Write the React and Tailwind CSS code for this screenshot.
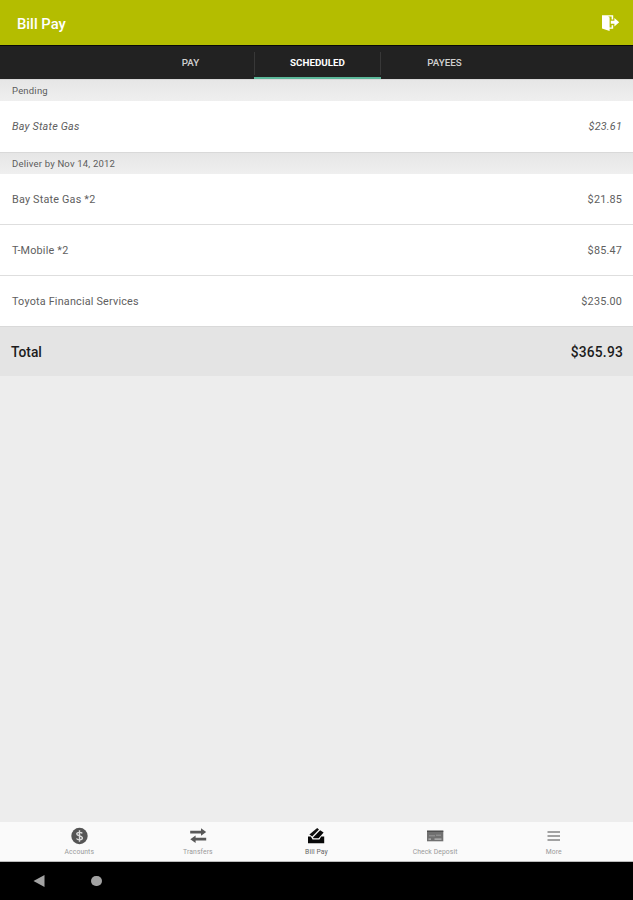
import React from "react";

const SCHEDULED = [
  { name: "Bay State Gas *2", amount: "$21.85" },
  { name: "T-Mobile *2", amount: "$85.47" },
  { name: "Toyota Financial Services", amount: "$235.00" },
];

function LogoutIcon() {
  return (
    <svg width="20" height="18" viewBox="0 0 20 18" className="block">
      <path d="M2 1.2 H13.2 V5.5 H11.6 V2.6 H8.2 L9.6 3.4 V13.4 H11.6 V11.2 H13.2 V14.8 H9.6 V17 L2 14.4 Z" fill="#fff" />
      <path d="M10.8 6.7 H14.4 V4 L19.2 8.2 L14.4 12.4 V9.7 H10.8 Z" fill="#fff" />
    </svg>
  );
}

function AccountsIcon() {
  return (
    <svg width="18" height="18" viewBox="0 0 18 18" className="block">
      <circle cx="9.5" cy="9" r="8.2" fill="#555" />
      <path d="M12.3 6.3 C11.5 5.1 6.8 4.7 6.8 7 C6.8 9.4 12.4 8.4 12.4 11 C12.4 13.3 7.5 13.1 6.5 11.5 M9.5 3.3 V14.7" fill="none" stroke="#dcdcdc" strokeWidth="1.4" />
    </svg>
  );
}

function TransfersIcon() {
  return (
    <svg width="18" height="18" viewBox="0 0 18 18" className="block" fill="#585858">
      <path d="M1.2 3.7 H12 V1.2 L17.2 5 L12 8.8 V6.5 H1.2 Z" />
      <path d="M17.2 10.8 H6.6 V8.5 L1.3 12.2 L6.6 15.9 V13.6 H17.2 Z" />
    </svg>
  );
}

function BillPayIcon() {
  return (
    <svg width="18" height="18" viewBox="0 0 18 18" className="block">
      <path d="M1 9.4 H3.8 L5.6 12.4 H12.4 L14.2 9.4 H17.2 V16.3 H1 Z" fill="#080808" />
      <path d="M2.4 7.6 L10.2 1 L12 2.6 L5.2 9.6 Z" fill="#111" />
      <path d="M6 10.4 L13.2 3.2 L16.6 5.6 L11.6 11.2 H6.6 Z" fill="#080808" />
    </svg>
  );
}

function CheckIcon() {
  return (
    <svg width="18" height="18" viewBox="0 0 18 18" className="block">
      <rect x="1" y="3.7" width="16.3" height="10.6" fill="#707070" />
      <path d="M1 4.3 H17.3" stroke="#4c4c4c" strokeWidth="1.3" />
      <path d="M3 8.8 H9 M10 8.2 H15" stroke="#999" strokeWidth="1" />
      <path d="M2.5 12.2 H5 M8.5 12.2 H15.5" stroke="#bbb" strokeWidth="1.2" />
    </svg>
  );
}

function MoreIcon() {
  return (
    <svg width="18" height="18" viewBox="0 0 18 18" className="block">
      <path d="M2.5 5 H15 M2.5 9 H15 M2.5 13 H15" stroke="#858585" strokeWidth="1.7" />
    </svg>
  );
}

const NAV = [
  { label: "Accounts", Icon: AccountsIcon },
  { label: "Transfers", Icon: TransfersIcon },
  { label: "Bill Pay", Icon: BillPayIcon, active: true },
  { label: "Check Deposit", Icon: CheckIcon },
  { label: "More", Icon: MoreIcon },
];

function SectionHeader({ children }) {
  return (
    <div className="flex h-[22px] shrink-0 items-center border-t border-[#d9d9d9] bg-linear-to-b from-[#e6e6e6] to-[#efefef] px-3 pt-px text-[9.5px] tracking-[0.2px] text-[#5c5c5c]">
      {children}
    </div>
  );
}

function Row({ name, amount, italic }) {
  return (
    <div
      className={`flex h-[51px] shrink-0 items-center justify-between border-b border-[#dedede] bg-white pt-[2px] pr-[11px] pl-3 text-[10.8px] text-[#606060] last:border-b-0 ${italic ? "italic" : ""}`}
    >
      <span className="tracking-[0.2px]">{name}</span>
      <span className="tracking-[0.2px]">{amount}</span>
    </div>
  );
}

export default function App() {
  return (
    <div className="flex h-[900px] w-[633px] flex-col overflow-hidden bg-[#ededed] font-['Roboto',sans-serif]">
      <header className="flex h-[45px] shrink-0 items-center justify-between bg-[#b4bd00] pr-[13px] pl-[17px]">
        <h1 className="pt-[3px] text-[14.8px] font-medium text-white">Bill Pay</h1>
        <LogoutIcon />
      </header>

      <nav className="flex h-[34px] shrink-0 justify-center border-t border-[#080808] bg-[#222] pl-[2px] text-[9.8px] font-medium text-[#d0d0d0]">
        <div className="flex w-[127px] items-center justify-center pt-[2px]">PAY</div>
        <div className="flex w-[127px] flex-col border-b-2 border-[#5cb89a] font-bold text-white">
          <div className="mt-[6px] flex h-[23px] items-center justify-center border-x border-[#383838]">SCHEDULED</div>
        </div>
        <div className="flex w-[127px] items-center justify-center pt-[2px]">PAYEES</div>
      </nav>

      <main className="flex flex-1 flex-col">
        <SectionHeader>Pending</SectionHeader>
        <div className="flex flex-col">
          <Row name="Bay State Gas" amount="$23.61" italic />
        </div>
        <SectionHeader>Deliver by Nov 14, 2012</SectionHeader>
        <div className="flex flex-col">
          {SCHEDULED.map((p) => (
            <Row key={p.name} name={p.name} amount={p.amount} />
          ))}
        </div>
        <div className="-mt-px flex h-[50px] shrink-0 items-center justify-between border-t border-[#d9d9d9] bg-[#e4e4e4] pt-[2px] pr-[10px] pl-[11px] text-[13.8px] font-medium text-[#1c1c1c]">
          <span>Total</span>
          <span className="tracking-[0.2px]">$365.93</span>
        </div>
      </main>

      <nav className="flex h-10 shrink-0 border-b border-[#bbb] bg-[#fafafa] px-5">
        {NAV.map(({ label, Icon, active }) => (
          <div key={label} className="flex flex-1 flex-col items-center pt-[5px]">
            <Icon />
            <span className={`mt-[3px] text-[6.8px] leading-[8px] tracking-[0.1px] whitespace-nowrap ${active ? "text-[#666]" : "text-[#999]"}`}>
              {label}
            </span>
          </div>
        ))}
      </nav>

      <footer className="flex h-[38px] shrink-0 items-center gap-[46px] bg-black pl-[33px]">
        <svg width="12" height="12" viewBox="0 0 12 12">
          <path d="M0.5 6 L11.5 0 V12 Z" fill="#a3a3a3" />
        </svg>
        <span className="size-[10.5px] rounded-full bg-[#a3a3a3]" />
      </footer>
    </div>
  );
}
